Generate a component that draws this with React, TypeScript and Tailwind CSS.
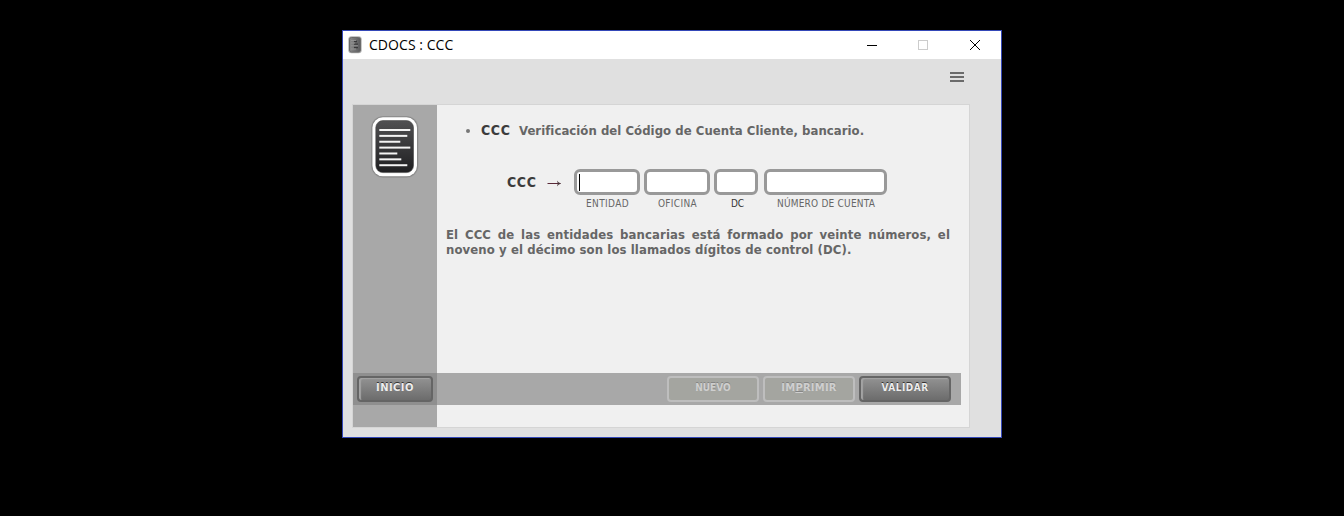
import React from "react";

const LINES = [31, 28, 21, 31, 18, 22, 28];

function DocIcon() {
  return (
    <svg width="48" height="62" viewBox="0 0 48 62" className="block">
      <defs>
        <linearGradient id="doc" x1="0" y1="0" x2="0" y2="1">
          <stop offset="0" stopColor="#505052" />
          <stop offset="1" stopColor="#1f1f21" />
        </linearGradient>
      </defs>
      <rect x="0" y="0" width="47.5" height="61.8" rx="12" fill="#999" />
      <rect x="0.7" y="0.5" width="46" height="60.7" rx="11.5" fill="#858585" />
      <rect x="1.4" y="1.3" width="44.6" height="59" rx="10.5" fill="#fff" />
      <rect x="4.8" y="4.6" width="37.7" height="52" rx="7" fill="url(#doc)" stroke="#444" strokeWidth="0.6" />
      {LINES.map((w, i) => (
        <rect key={i} x="8.3" y={13 + i * 5.87} width={w} height="2" fill="#f4f4f4" />
      ))}
    </svg>
  );
}

function TitleIcon() {
  return (
    <svg width="14" height="18" viewBox="0 0 14 18" className="block">
      <defs>
        <linearGradient id="mini" x1="0" y1="0" x2="1" y2="0">
          <stop offset="0" stopColor="#8a8a8a" />
          <stop offset="1" stopColor="#5a5a5c" />
        </linearGradient>
      </defs>
      <rect x="0.3" y="0.3" width="13.4" height="17" rx="3" fill="#b4b4b4" />
      <rect x="1.5" y="1.5" width="11" height="14.6" rx="2" fill="url(#mini)" stroke="#6a6a6a" />
      <path d="M6 5.5h3M6 8.2h4M6 11.5h4" stroke="#38383a" strokeWidth="1.3" />
      <path d="M3 4.5h5M3 7h4M3 9.8h7M3 13h5" stroke="#999" strokeWidth="0.8" />
    </svg>
  );
}

function Field({ w, label, className = "", labelClass = "text-[#666]", caret = false }: { w: string; label: string; className?: string; labelClass?: string; caret?: boolean }) {
  return (
    <div className={`${w} ${className}`}>
      <div className="flex h-[26px] items-center rounded-[6px] border-[3px] border-[#999] bg-white pl-[2px]">
        {caret && <span className="h-[17px] w-px bg-black" />}
      </div>
      <div className={`mt-[2px] flex justify-center text-[10px] leading-[14px] whitespace-nowrap ${labelClass}`}>
        <span>{label}</span>
      </div>
    </div>
  );
}

function Btn({ children, w = "w-[92px]", font = "", disabled = false }: { children: React.ReactNode; w?: string; font?: string; disabled?: boolean }) {
  return (
    <button
      className={`${w} ${font} flex h-[26px] justify-center rounded-[4px] border-2 pt-[3px] text-[10px] leading-[13px] font-bold whitespace-nowrap ${
        disabled
          ? "border-[#bebebe] bg-[#a4a5a0] text-[#cfcfcf] [text-shadow:0_-1px_0_#858585]"
          : "border-[#656565] bg-linear-to-b from-[#929292] to-[#6c6c6c] text-[#ededed] shadow-[inset_2px_1px_1px_#a3a3a3] [text-shadow:0_-1px_0_#333]"
      }`}
    >
      <span>{children}</span>
    </button>
  );
}

export default function App() {
  return (
    <div className="h-[516px] w-[1344px] bg-black pt-[30px] pl-[342px] [font-family:'DejaVu_Sans_Condensed','DejaVu_Sans',sans-serif]">
      <div className="h-[408px] w-[660px] border border-[#3448b8] bg-[#e0e0e0]">
        <header className="flex h-[28px] items-center bg-white pl-[5px]">
          <TitleIcon />
          <span className="ml-[7px] w-[492px] text-[14px] leading-[18px] text-black [font-family:'Open_Sans',sans-serif]">
            <span className="tracking-[0.05px]">CDOCS : CCC</span>
          </span>
          <svg width="130" height="12" viewBox="0 0 130 12" className="block">
            <path d="M6 6.5h10" stroke="#000" />
            <rect x="57.5" y="1.5" width="9" height="9" fill="none" stroke="#ccc" />
            <path d="M109 1l10 10M119 1l-10 10" stroke="#000" strokeWidth="1" />
          </svg>
        </header>
        <div className="flex h-[45px] justify-end pt-[13px] pr-[37px]">
          <svg width="14" height="10" viewBox="0 0 14 10" className="block">
            <path d="M0 1h14M0 5h14M0 9h14" stroke="#6b6b6b" strokeWidth="2" />
          </svg>
        </div>
        <main className="ml-[9px] flex h-[324px] w-[618px] border border-[#d5d5d5] bg-[#f0f0f0]">
          <aside className="flex w-[84px] flex-col bg-[#a8a8a8]">
            <div className="h-[268px] pt-[11px] pl-[18px]">
              <DocIcon />
            </div>
            <div className="h-[32px] bg-[#8f8f8f] pt-[3px] pl-[4px]">
              <Btn w="w-[76px]" font="tracking-[0.4px] [font-family:'DejaVu_Sans',sans-serif]">INICIO</Btn>
            </div>
          </aside>
          <section className="flex w-[524px] flex-col">
            <div className="h-[268px]">
              <div className="flex h-[52px] items-center pl-[29px] text-[13px] leading-[16px] font-bold whitespace-nowrap text-[#666]">
                <span className="mr-[11px] size-[4px] rounded-full bg-[#777]" />
                <span className="w-[38px] pb-[2px] text-[14px] tracking-[0.6px] text-[#3c3c3c]">CCC</span>
                <span className="tracking-[0.045px]">Verificación del Código de Cuenta Cliente, bancario.</span>
              </div>
              <div className="mt-[12px] flex pl-[70px]">
                <span className="mt-[5px] w-[40px] text-[14px] leading-[16px] font-bold tracking-[0.6px] text-[#3c3c3c]">CCC</span>
                <svg width="27" height="26" viewBox="0 0 27 26" className="block">
                  <path d="M0.5 14.5h13" fill="none" stroke="#5a2a38" />
                  <path d="M10 11.5q1 2.2 4 3q-3 0.8-4 3l0.8-3z" fill="#49353a" />
                </svg>
                <Field w="w-[66px]" label="ENTIDAD" labelClass="pl-[1px] tracking-[0.35px] text-[#666]" caret />
                <Field w="w-[66px]" className="ml-[4px]" label="OFICINA" labelClass="pl-[1px] tracking-[0.35px] text-[#666]" />
                <Field w="w-[44px]" className="ml-[4px]" label="DC" labelClass="pl-[3px] text-[#333]" />
                <Field w="w-[123px]" className="ml-[6px]" label="NÚMERO DE CUENTA" labelClass="pl-[1px] tracking-[0.22px] text-[#666]" />
              </div>
              <p className="mt-[16px] ml-[9px] w-[504px] text-justify text-[13px] leading-[15px] font-bold tracking-[0.1px] text-[#666]">
                El CCC de las entidades bancarias está formado por veinte números, el noveno y el décimo son los llamados dígitos de control (DC).
              </p>
            </div>
            <div className="flex h-[32px] gap-[4px] bg-[#a8a8a8] pt-[3px] pl-[230px]">
              <Btn disabled>NUEVO</Btn>
              <Btn disabled font="tracking-[0.2px] [font-family:'DejaVu_Sans',sans-serif]">IM<u>P</u>RIMIR</Btn>
              <Btn font="tracking-[0.5px]">VALIDAR</Btn>
            </div>
          </section>
        </main>
      </div>
    </div>
  );
}
